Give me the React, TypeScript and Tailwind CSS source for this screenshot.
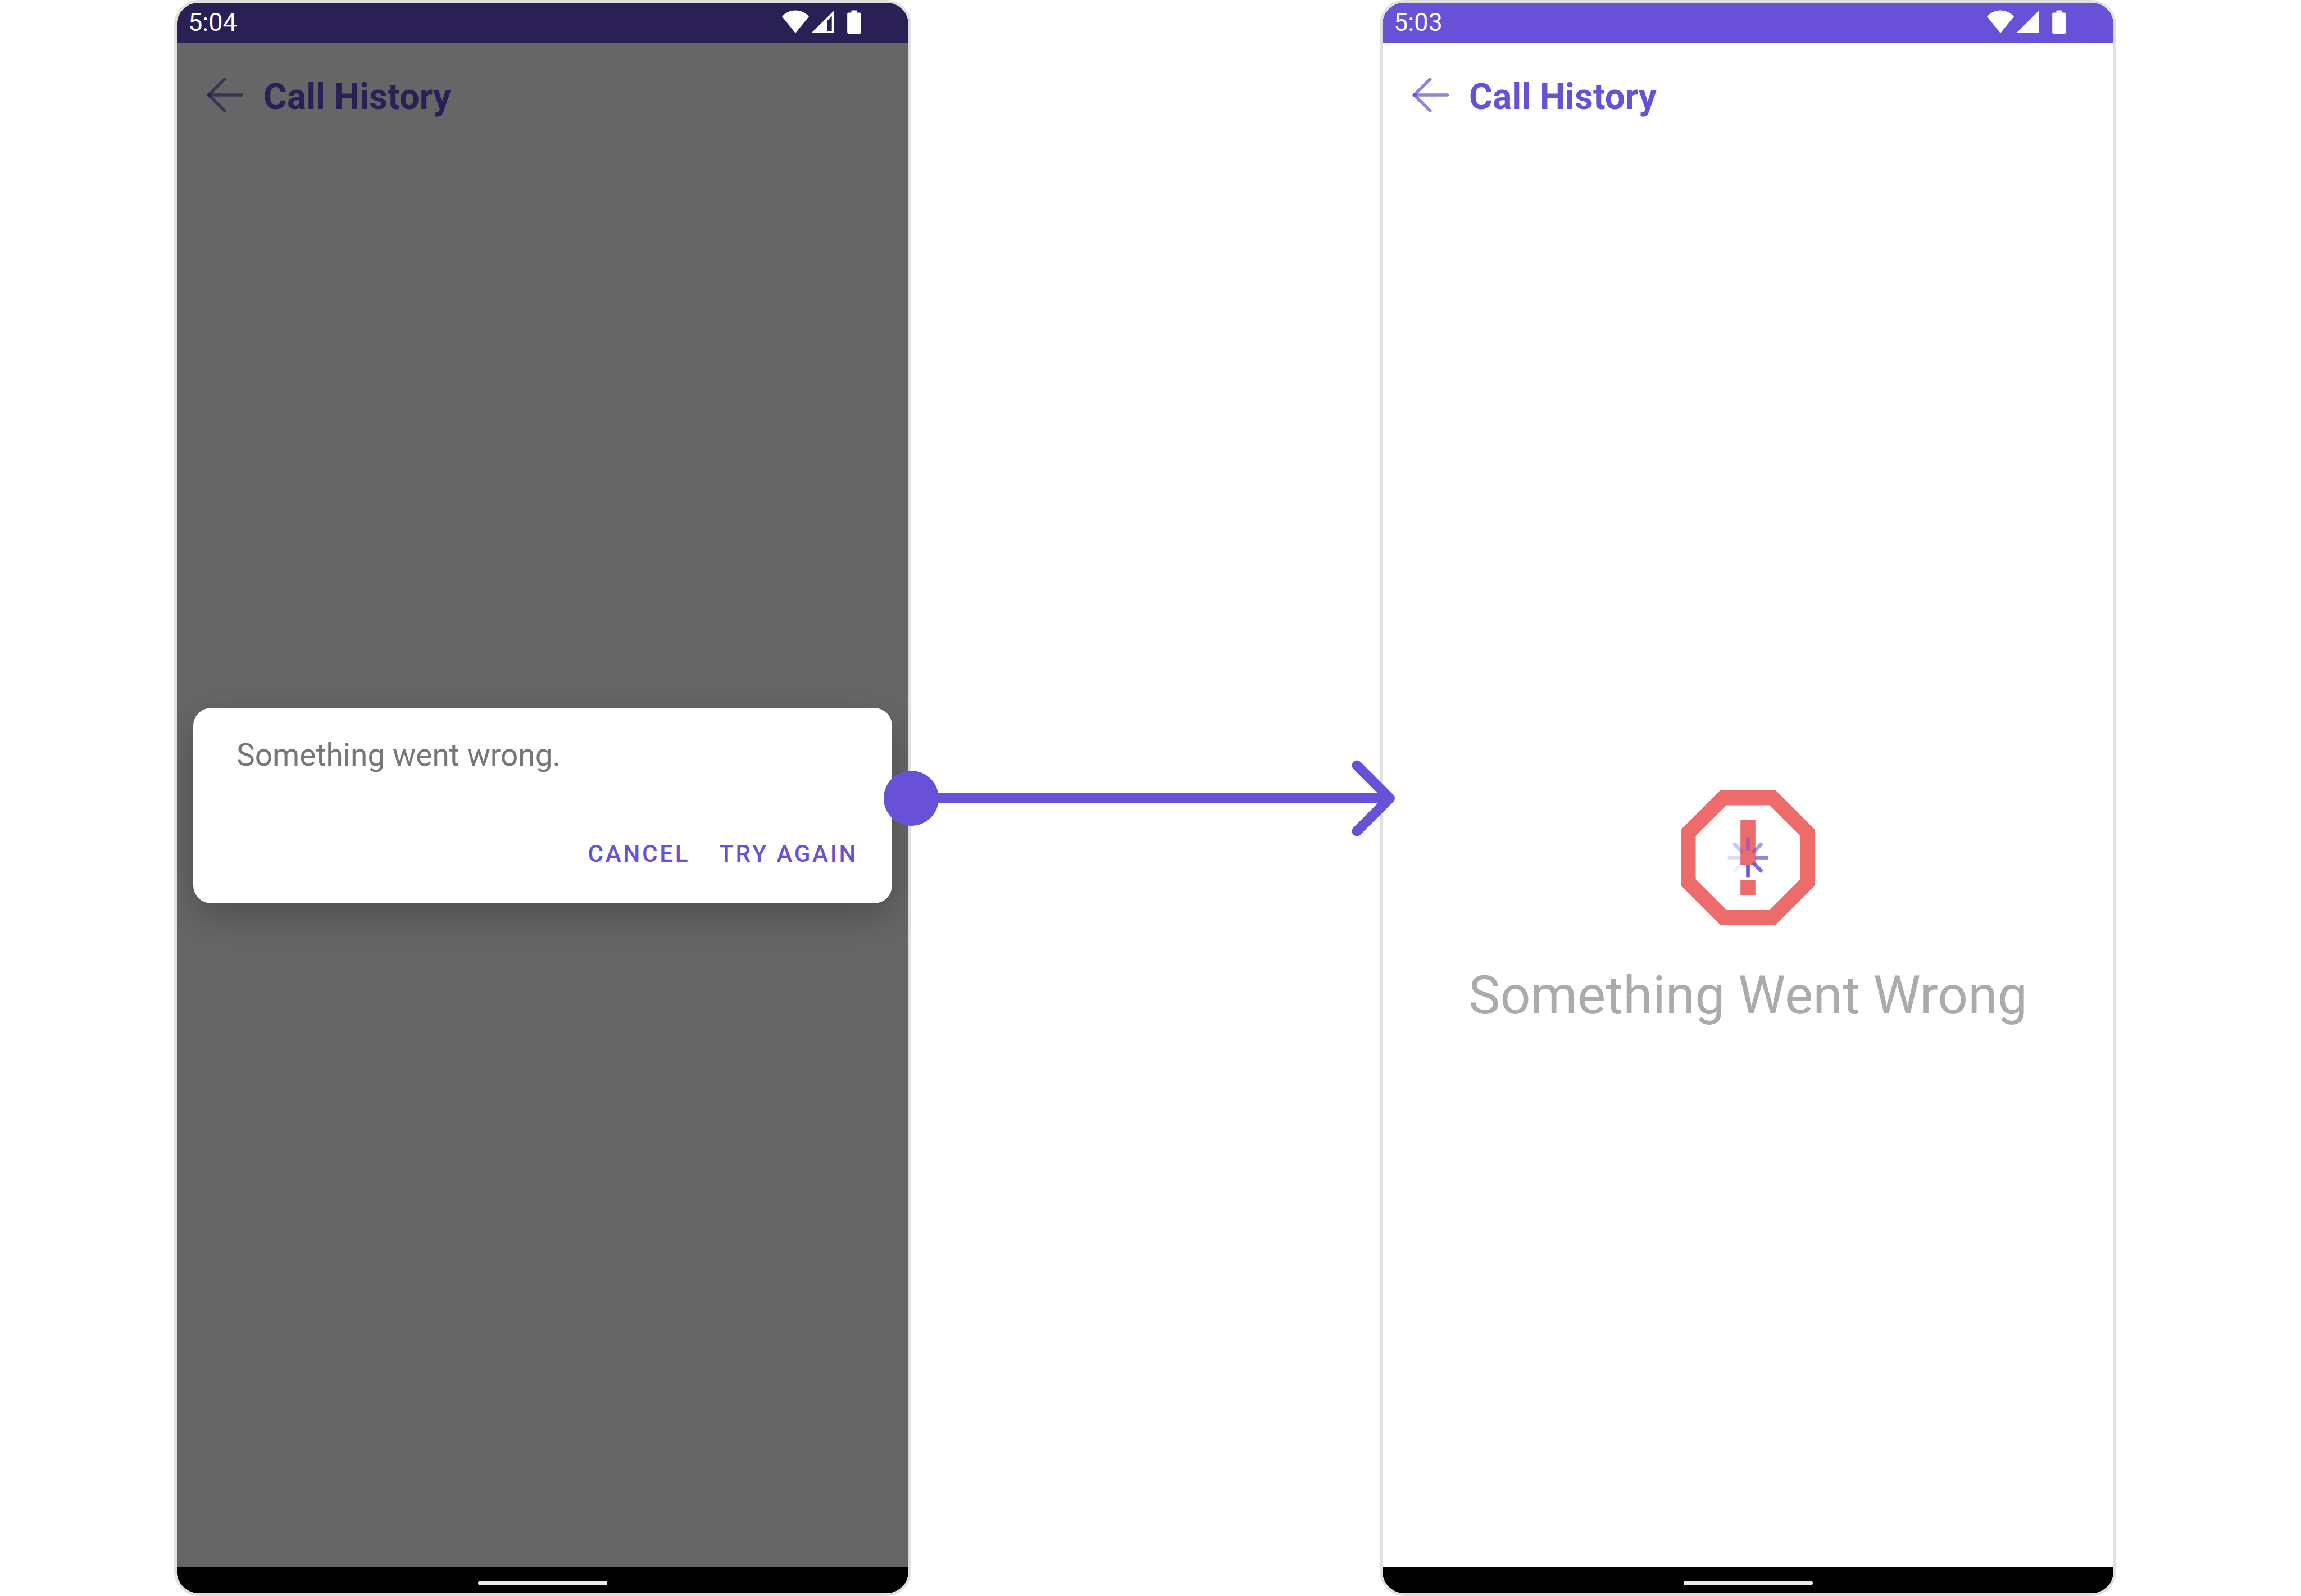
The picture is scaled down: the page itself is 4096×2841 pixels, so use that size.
import type { ReactNode } from "react";

type PhoneProps = {
  time: string;
  dimmed?: boolean;
  weakSignal?: boolean;
  children: ReactNode;
};

function WifiIcon() {
  return (
    <svg className="h-[41px] w-[48px]" viewBox="0 0 53 45" fill="currentColor" aria-hidden="true">
      <path d="M26.5 45 0 12.2C7.500 4.500 16.500.500 26.500.500S45.500 4.500 53 12.200Z" />
    </svg>
  );
}

function SignalIcon({ weak }: { weak?: boolean }) {
  return (
    <svg className="h-[41px] w-[41px]" viewBox="0 0 45 45" fill="currentColor" aria-hidden="true">
      {weak ? (
        <path fillRule="evenodd" d="M45 .5V45H0ZM40.300 11.800 31 21V40.500H40.300Z" />
      ) : (
        <path d="M45 .5V45H0Z" />
      )}
    </svg>
  );
}

function BatteryIcon() {
  return (
    <svg className="h-[42px] w-[25px]" viewBox="0 0 27 46" fill="currentColor" aria-hidden="true">
      <path d="M8 .5H19V5H24A3 3 0 0 1 27 8V43A3 3 0 0 1 24 46H3A3 3 0 0 1 0 43V8A3 3 0 0 1 3 5H8Z" />
    </svg>
  );
}

function BackArrow() {
  return (
    <svg
      className="h-[66px] w-[69px]"
      viewBox="0 0 76 72"
      fill="none"
      stroke="currentColor"
      strokeWidth="6"
      strokeLinecap="round"
      aria-hidden="true"
    >
      <path opacity="0.72" d="M6 36H71" />
      <path opacity="0.72" d="M6 36 37.300 5" />
      <path opacity="0.72" d="M6 36 37.300 67" />
    </svg>
  );
}

function Phone({ time, dimmed, weakSignal, children }: PhoneProps) {
  return (
    <section className="flex flex-col overflow-hidden rounded-[44px] border-[5px] border-[#e0e0e0] bg-black">
      <div
        className={
          "flex h-[72px] shrink-0 items-start justify-between pl-5 pr-[84px] text-white " +
          (dimmed ? "bg-[#2a2055]" : "bg-[#6851d6]")
        }
      >
        <time className="pt-[9px] text-[45px] leading-[52px]">{time}</time>
        <div className="flex items-start pt-[13px]">
          <WifiIcon />
          <span className="ml-1">
            <SignalIcon weak={weakSignal} />
          </span>
          <span className="ml-[23px]">
            <BatteryIcon />
          </span>
        </div>
      </div>
      <div className={"relative flex flex-1 flex-col " + (dimmed ? "bg-[#666666]" : "bg-white")}>
        <header
          className={
            "flex h-[192px] shrink-0 items-center pl-[51px] " +
            (dimmed ? "text-[#2a2055]" : "text-[#6851d6]")
          }
        >
          <button type="button" aria-label="Back" className="pb-[8px]">
            <BackArrow />
          </button>
          <h1 className="ml-[34px] text-[64px] font-bold leading-[76px]">Call History</h1>
        </header>
        {children}
      </div>
      <div className="flex h-[46px] shrink-0 items-center justify-center bg-black pt-[10px]">
        <div className="h-[8px] w-[230px] rounded-full bg-[#ece9ea]" />
      </div>
    </section>
  );
}

function ErrorDialog() {
  return (
    <div className="absolute inset-0 flex items-center overflow-hidden px-[29px]">
      <div
        role="alertdialog"
        aria-describedby="dialog-message"
        className="flex w-full flex-col justify-between rounded-[32px] bg-white pb-[63px] pl-[77px] pr-[61px] pt-[52px] shadow-[0_24px_66px_rgba(0,0,0,0.23)]"
      >
        <p id="dialog-message" className="text-[55px] leading-[64px] text-[#777777]">
          Something went wrong.
        </p>
        <div className="mt-[119px] flex justify-end gap-[52px] text-[42px] font-medium leading-[50px] tracking-[0.09em] text-[#6851d6]">
          <button type="button">CANCEL</button>
          <button type="button">TRY AGAIN</button>
        </div>
      </div>
    </div>
  );
}

const spokes = [
  { angle: 0, opacity: 0.5 },
  { angle: 45, opacity: 0.56 },
  { angle: 90, opacity: 0.7 },
  { angle: 135, opacity: 0.84 },
  { angle: 180, opacity: 0.96 },
  { angle: 225, opacity: 0.08 },
  { angle: 270, opacity: 0.2 },
  { angle: 315, opacity: 0.33 },
];

function ErrorIcon() {
  return (
    <svg className="size-[239px]" viewBox="3 3 18 18" aria-hidden="true">
      <path
        fill="#ed6b6b"
        fillRule="evenodd"
        d="M15.730 3H8.270L3 8.270V15.730L8.270 21H15.730L21 15.730V8.270ZM19 14.900 14.900 19H9.100L5 14.900V9.100L9.100 5H14.900L19 9.100ZM11 7H13V13H11ZM11 15H13V17H11Z"
      />
      {spokes.map((s) => (
        <path
          key={s.angle}
          d="M12 11.050V9.300"
          stroke="#6851d6"
          strokeWidth="0.5"
          opacity={s.opacity}
          transform={`rotate(${s.angle} 12 12)`}
        />
      ))}
    </svg>
  );
}

function ErrorState() {
  return (
    <div className="flex flex-1 flex-col items-center justify-center pt-[176px]">
      <ErrorIcon />
      <p className="mt-[70px] text-[95px] leading-[112px] text-[#ababab]">Something Went Wrong</p>
    </div>
  );
}

function Connector() {
  return (
    <div className="relative z-10 -ml-[49px] -mr-[27px] flex items-center text-[#6851d6]">
      <div className="size-[98px] shrink-0 rounded-full bg-current" />
      <div className="-ml-2 h-[18px] flex-1 bg-current" />
      <svg
        className="h-[136px] w-[78px] shrink-0"
        viewBox="0 0 78 136"
        fill="none"
        stroke="currentColor"
        strokeWidth="18"
        aria-hidden="true"
      >
        <path d="M0 68H66" />
        <path strokeLinecap="round" strokeLinejoin="round" d="M10.500 9.500 69 68 10.500 126.500" />
      </svg>
    </div>
  );
}

export default function App() {
  return (
    <div className="grid min-h-screen grid-cols-[1312fr_834fr_1311fr] bg-white pl-[310px] pr-[329px] font-['Roboto',sans-serif]">
      <Phone time="5:04" dimmed weakSignal>
        <ErrorDialog />
      </Phone>
      <Connector />
      <Phone time="5:03">
        <ErrorState />
      </Phone>
    </div>
  );
}
